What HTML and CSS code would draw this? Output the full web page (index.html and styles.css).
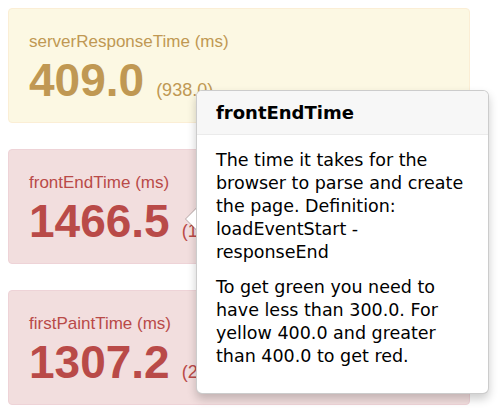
FILE: index.html
```html
<!DOCTYPE html>
<html>
<head>
<meta charset="utf-8">
<link rel="stylesheet" href="styles.css">
</head>
<body>
<div class="page">
  <div class="card card-warning">
    <div class="label">serverResponseTime (ms)</div>
    <div class="value">409.0<span class="ref">(938.0)</span></div>
  </div>
  <div class="card card-error">
    <div class="label">frontEndTime (ms)</div>
    <div class="value">1466.5<span class="ref">(1019.0)</span></div>
  </div>
  <div class="card card-error">
    <div class="label">firstPaintTime (ms)</div>
    <div class="value">1307.2<span class="ref">(2004.0)</span></div>
  </div>

  <div class="popover">
    <div class="arrow"></div>
    <h3 class="popover-title">frontEndTime</h3>
    <div class="popover-content">
      <p>The time it takes for the browser to parse and create the page. Definition: loadEventStart - responseEnd</p>
      <p>To get green you need to have less than 300.0. For yellow 400.0 and greater than 400.0 to get red.</p>
    </div>
  </div>
</div>
</body>
</html>
```
FILE: styles.css
```css
html, body {
  margin: 0;
  padding: 0;
  background: #ffffff;
}
body {
  padding: 8px;
  font-family: "Liberation Sans", Arial, sans-serif;
}
.page {
  position: relative;
  width: 462px;
  display: flex;
  flex-direction: column;
  gap: 26px;
}
.card {
  box-sizing: border-box;
  height: 115px;
  border: 1px solid;
  border-radius: 4px;
  padding: 23px 20px 14px 20px;
}
.card-warning {
  background: #fcf8e3;
  border-color: #fbeed5;
  color: #c09853;
}
.card-error {
  background: #f2dede;
  border-color: #eed3d7;
  color: #b94a48;
}
.label {
  font-size: 17px;
  line-height: 20px;
  white-space: nowrap;
}
.value {
  font-size: 46px;
  line-height: 56px;
  font-weight: bold;
  white-space: nowrap;
}
.ref {
  font-size: 18px;
  font-weight: normal;
  margin-left: 12px;
}
.popover {
  position: absolute;
  left: 188px;
  top: 82px;
  box-sizing: border-box;
  width: 293px;
  height: 304px;
  background: #ffffff;
  border: 1px solid rgba(0, 0, 0, 0.2);
  border-radius: 6px;
  box-shadow: 0 5px 10px rgba(0, 0, 0, 0.2);
  font-family: "DejaVu Sans", Verdana, sans-serif;
  color: #000000;
}
.popover-title {
  margin: 0;
  padding: 9px 19px 8px 19px;
  font-size: 18px;
  line-height: 26px;
  font-weight: bold;
  background: #f7f7f7;
  border-bottom: 1px solid #ebebeb;
  border-radius: 5px 5px 0 0;
}
.popover-content {
  padding: 14px 19px 13px 19px;
  font-size: 17.5px;
  line-height: 23px;
}
.popover-content p {
  margin: 0 0 12px 0;
}
.arrow {
  position: absolute;
  left: -12px;
  top: 117px;
  width: 0;
  height: 0;
  border-style: solid;
  border-width: 11px 11px 11px 0;
  border-color: transparent rgba(0, 0, 0, 0.25) transparent transparent;
}
.arrow::after {
  content: "";
  position: absolute;
  left: 1px;
  top: -10px;
  width: 0;
  height: 0;
  border-style: solid;
  border-width: 10px 10px 10px 0;
  border-color: transparent #ffffff transparent transparent;
}
```
